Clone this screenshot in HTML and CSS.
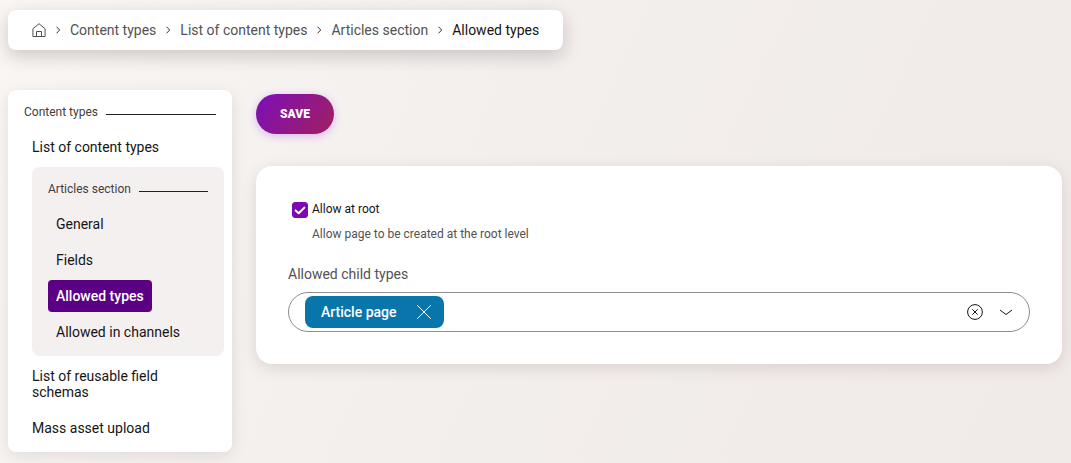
FILE: index.html
```html
<!DOCTYPE html>
<html lang="en">
<head>
<meta charset="utf-8">
<meta name="viewport" content="width=device-width, initial-scale=1">
<title>Allowed types</title>
<link rel="stylesheet" href="styles.css">
</head>
<body>
<nav class="breadcrumbs" aria-label="Breadcrumbs">
  <a class="crumb home" href="#" aria-label="Home"><svg width="14" height="14" viewBox="0 0 14 14"><path d="M.9 5.8V13.5H13.1V5.8L7 .7ZM4.5 13.5V8.5H9.5V13.5"/></svg></a>
  <svg class="sep" width="8" height="8" viewBox="0 0 8 8"><path d="M2.5 .7 5.7 4 2.5 7.3"/></svg>
  <a class="crumb" href="#">Content types</a>
  <svg class="sep" width="8" height="8" viewBox="0 0 8 8"><path d="M2.5 .7 5.7 4 2.5 7.3"/></svg>
  <a class="crumb" href="#">List of content types</a>
  <svg class="sep" width="8" height="8" viewBox="0 0 8 8"><path d="M2.5 .7 5.7 4 2.5 7.3"/></svg>
  <a class="crumb" href="#">Articles section</a>
  <svg class="sep" width="8" height="8" viewBox="0 0 8 8"><path d="M2.5 .7 5.7 4 2.5 7.3"/></svg>
  <a class="crumb current" href="#" aria-current="page">Allowed types</a>
</nav>
<div class="layout">
  <nav class="sidebar" aria-label="Content types">
    <h2 class="group-title">Content types</h2>
    <div class="items">
      <a class="item" href="#">List of content types</a>
      <section class="subgroup">
        <h3 class="group-title">Articles section</h3>
        <a class="item" href="#">General</a>
        <a class="item" href="#">Fields</a>
        <a class="item selected" href="#">Allowed types</a>
        <a class="item" href="#">Allowed in channels</a>
      </section>
      <a class="item" href="#">List of reusable field schemas</a>
      <a class="item" href="#">Mass asset upload</a>
    </div>
  </nav>
  <main class="main">
    <button class="save" type="submit">SAVE</button>
    <form class="card">
      <div class="option">
        <span class="check-wrap">
          <input class="check" type="checkbox" id="root" checked aria-describedby="root-help">
          <svg class="check-mark" width="16" height="16" viewBox="0 0 16 16"><path d="M3.6 8.4 6.7 11.2 12.4 5.6"/></svg>
        </span>
        <div class="option-text">
          <label class="option-label" for="root">Allow at root</label>
          <p class="help" id="root-help">Allow page to be created at the root level</p>
        </div>
      </div>
      <label class="field-label" for="types">Allowed child types</label>
      <div class="combo">
        <span class="tag">Article page
          <button class="icon-button" type="button" aria-label="Remove Article page"><svg width="16" height="16" viewBox="0 0 16 16"><path d="M1.2 1.2 14.8 14.8M14.8 1.2 1.2 14.8"/></svg></button>
        </span>
        <input class="combo-input" id="types" type="text">
        <button class="icon-button" type="button" aria-label="Clear"><svg width="16" height="16" viewBox="0 0 16 16"><circle cx="8" cy="8" r="7.4"/><path d="M5.3 5.3 10.7 10.7M10.7 5.3 5.3 10.7"/></svg></button>
        <button class="icon-button" type="button" aria-label="Open list"><svg width="14" height="16" viewBox="0 0 14 16"><path d="M1 6 7 10.5 13 6"/></svg></button>
      </div>
    </form>
  </main>
</div>
</body>
</html>
```
FILE: styles.css
```css
* { box-sizing: border-box; }

body {
  margin: 0;
  min-height: 100vh;
  padding: 10px 9px 11px 8px;
  font: 14px/16px Roboto, "Liberation Sans", sans-serif;
  color: #151515;
  background: linear-gradient(115deg, #f9f6f3 0%, #f3efed 45%, #f0eae8 100%);
}

a { color: inherit; text-decoration: none; }
svg { display: block; fill: none; stroke: currentColor; }
button, input { font: inherit; }

.breadcrumbs {
  display: flex;
  align-items: center;
  gap: 8px;
  width: fit-content;
  min-height: 40px;
  padding: 0 24px;
  border-radius: 8px;
  background: #fff;
  box-shadow: 0 6px 18px rgba(40, 20, 20, .2);
}
.crumb { color: #525252; }
.current { color: #151515; }
.sep { color: #333; }

.layout {
  display: grid;
  grid-template-columns: 224px 1fr;
  align-items: start;
  gap: 24px;
  margin-top: 40px;
}

.sidebar {
  padding: 14px 8px 8px 16px;
  border-radius: 8px;
  background: #fff;
  box-shadow: 0 4px 16px rgba(40, 20, 20, .1);
}
.group-title {
  display: flex;
  align-items: center;
  gap: 8px;
  margin: 0 8px 11px 0;
  font-size: 12px;
  font-weight: 400;
  color: #404040;
}
.group-title::after {
  content: "";
  flex: 1;
  height: 1px;
  margin-top: 4px;
  background: #231f20;
}
.items {
  display: flex;
  flex-direction: column;
  align-items: flex-start;
  gap: 4px;
  padding-left: 8px;
}
.items > .item { padding-left: 0; }
.item { padding: 8px; border-radius: 4px; }
.selected { background: #5b0084; color: #fff; font-weight: 500; }
.subgroup {
  display: flex;
  flex-direction: column;
  align-items: flex-start;
  align-self: stretch;
  gap: 4px;
  padding: 14px 8px 8px 16px;
  border-radius: 8px;
  background: #f4f0f0;
}
.subgroup .group-title { align-self: stretch; margin-bottom: 7px; }

.main { padding-top: 4px; }
.save {
  display: block;
  height: 40px;
  padding: 0 24px;
  border: 0;
  border-radius: 20px;
  font-size: 12px;
  font-weight: 900;
  color: #fff;
  background: linear-gradient(125deg, #8010b0 10%, #a02060 100%);
  box-shadow: 0 2px 8px rgba(160, 40, 240, .3);
}
.card {
  margin-top: 32px;
  padding: 35px 32px 32px;
  border-radius: 16px;
  background: #fff;
  box-shadow: 0 4px 16px rgba(40, 20, 20, .12);
}
.option { display: flex; gap: 4px; padding-left: 4px; }
.check-wrap { display: grid; align-self: flex-start; padding-top: 1px; }
.check, .check-mark { grid-area: 1 / 1; }
.check {
  appearance: none;
  width: 16px;
  height: 16px;
  margin: 0;
  border: 1px solid #7d09b3;
  border-radius: 3px;
}
.check:checked { background: #7d09b3; }
.check-mark {
  visibility: hidden;
  z-index: 1;
  pointer-events: none;
  color: #fff;
  stroke-width: 2;
  stroke-linecap: round;
  stroke-linejoin: round;
}
.check:checked + .check-mark { visibility: visible; }
.option-text { font-size: 12px; }
.option-label { display: block; }
.help { margin: 9px 0 0; color: #525252; }
.field-label { display: block; margin: 24px 0 10px; color: #525252; }
.combo {
  display: flex;
  align-items: center;
  height: 40px;
  padding: 0 16px;
  gap: 16px;
  border: 1px solid #8c8c8c;
  border-radius: 20px;
}
.tag {
  display: flex;
  align-items: center;
  gap: 19px;
  height: 32px;
  padding: 0 12px 0 16px;
  border-radius: 8px;
  font-weight: 500;
  color: #fff;
  background: #0876aa;
}
.combo-input { flex: 1; min-width: 0; border: 0; outline: 0; background: none; }
.icon-button { padding: 0; border: 0; background: none; color: inherit; }
```
